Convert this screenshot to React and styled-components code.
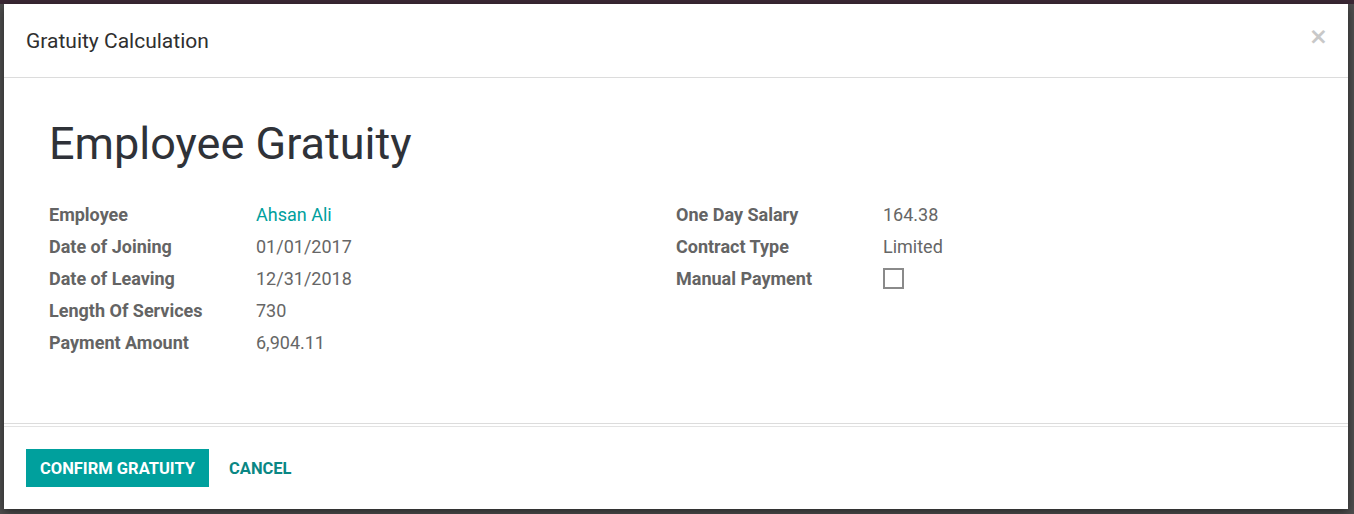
import React, { useState } from 'react'
import styled, { createGlobalStyle } from 'styled-components'

const GlobalStyle = createGlobalStyle`
  html, body {
    margin: 0;
    padding: 0;
    height: 100%;
    overflow: hidden;
    font-family: Roboto, "Liberation Sans", sans-serif;
  }
`

const teal = '#00a09d'

const Backdrop = styled.div`
  width: 1354px;
  height: 514px;
  box-sizing: border-box;
  padding: 4px 6px 5px 4px;
  background: linear-gradient(#3b2835 0 4px, #4f4f4f 4px);
`

const Modal = styled.div`
  height: 505px;
  background: #fff;
  display: flex;
  flex-direction: column;
  box-shadow: 0 3px 9px rgba(0, 0, 0, 0.5);
`

const Header = styled.div`
  height: 73px;
  flex: none;
  display: flex;
  align-items: center;
  justify-content: space-between;
  padding: 0 20px 0 22px;
  border-bottom: 1px solid #dcdcdc;
`

const Title = styled.h4`
  margin: 0;
  font-size: 21px;
  font-weight: 400;
  color: #2f2f2f;
`

const Close = styled.button`
  border: none;
  background: transparent;
  padding: 0;
  margin-top: -8px;
  color: #c8c8c8;
  font-family: "DejaVu Sans", sans-serif;
  font-size: 23px;
  font-weight: 700;
  line-height: 1;
  cursor: pointer;
`

const Body = styled.div`
  flex: 1;
  padding: 37px 45px 0 45px;
  border-bottom: 1px solid #dcdcdc;
  margin-bottom: 2px;
`

const Heading = styled.h1`
  margin: 0 0 25px 0;
  font-size: 45px;
  font-weight: 400;
  line-height: 58px;
  color: #2f3238;
`

const Groups = styled.div`
  display: grid;
  grid-template-columns: 627px 1fr;
`

const Group = styled.div`
  display: grid;
  grid-template-columns: 207px 1fr;
  grid-auto-rows: 32px;
  align-items: center;
`

const Label = styled.div`
  font-size: 18px;
  font-weight: 700;
  color: #646464;
`

const Value = styled.div`
  font-size: 18px;
  color: ${(p) => (p.$link ? teal : '#666')};
`

const Check = styled.span`
  display: block;
  width: 17px;
  height: 17px;
  border: 2px solid #8a8a8a;
  background: #fff;
  margin-top: 1px;
`

const Footer = styled.div`
  flex: none;
  height: 82px;
  display: flex;
  align-items: center;
  gap: 6px;
  padding: 0 22px;
  border-top: 1px solid #e3e3e3;
`

const Button = styled.button`
  height: 38px;
  padding: 0 14px;
  border: none;
  background: ${(p) => (p.$primary ? teal : 'transparent')};
  color: ${(p) => (p.$primary ? '#fff' : '#0a8784')};
  font-family: Roboto, "Liberation Sans", sans-serif;
  font-size: 16.5px;
  font-weight: 700;
  text-transform: uppercase;
  cursor: pointer;
`

const left = [
  ['Employee', 'Ahsan Ali', true],
  ['Date of Joining', '01/01/2017'],
  ['Date of Leaving', '12/31/2018'],
  ['Length Of Services', '730'],
  ['Payment Amount', '6,904.11'],
]

const right = [
  ['One Day Salary', '164.38'],
  ['Contract Type', 'Limited'],
]

export default function App() {
  const [manual, setManual] = useState(false)

  return (
    <>
      <GlobalStyle />
      <Backdrop>
        <Modal>
          <Header>
            <Title>Gratuity Calculation</Title>
            <Close>×</Close>
          </Header>
          <Body>
            <Heading>Employee Gratuity</Heading>
            <Groups>
              <Group>
                {left.map(([label, value, link]) => (
                  <React.Fragment key={label}>
                    <Label>{label}</Label>
                    <Value $link={link}>{value}</Value>
                  </React.Fragment>
                ))}
              </Group>
              <Group>
                {right.map(([label, value]) => (
                  <React.Fragment key={label}>
                    <Label>{label}</Label>
                    <Value>{value}</Value>
                  </React.Fragment>
                ))}
                <Label>Manual Payment</Label>
                <Value>
                  <Check onClick={() => setManual(!manual)} />
                </Value>
              </Group>
            </Groups>
          </Body>
          <Footer>
            <Button $primary>Confirm Gratuity</Button>
            <Button>Cancel</Button>
          </Footer>
        </Modal>
      </Backdrop>
    </>
  )
}
